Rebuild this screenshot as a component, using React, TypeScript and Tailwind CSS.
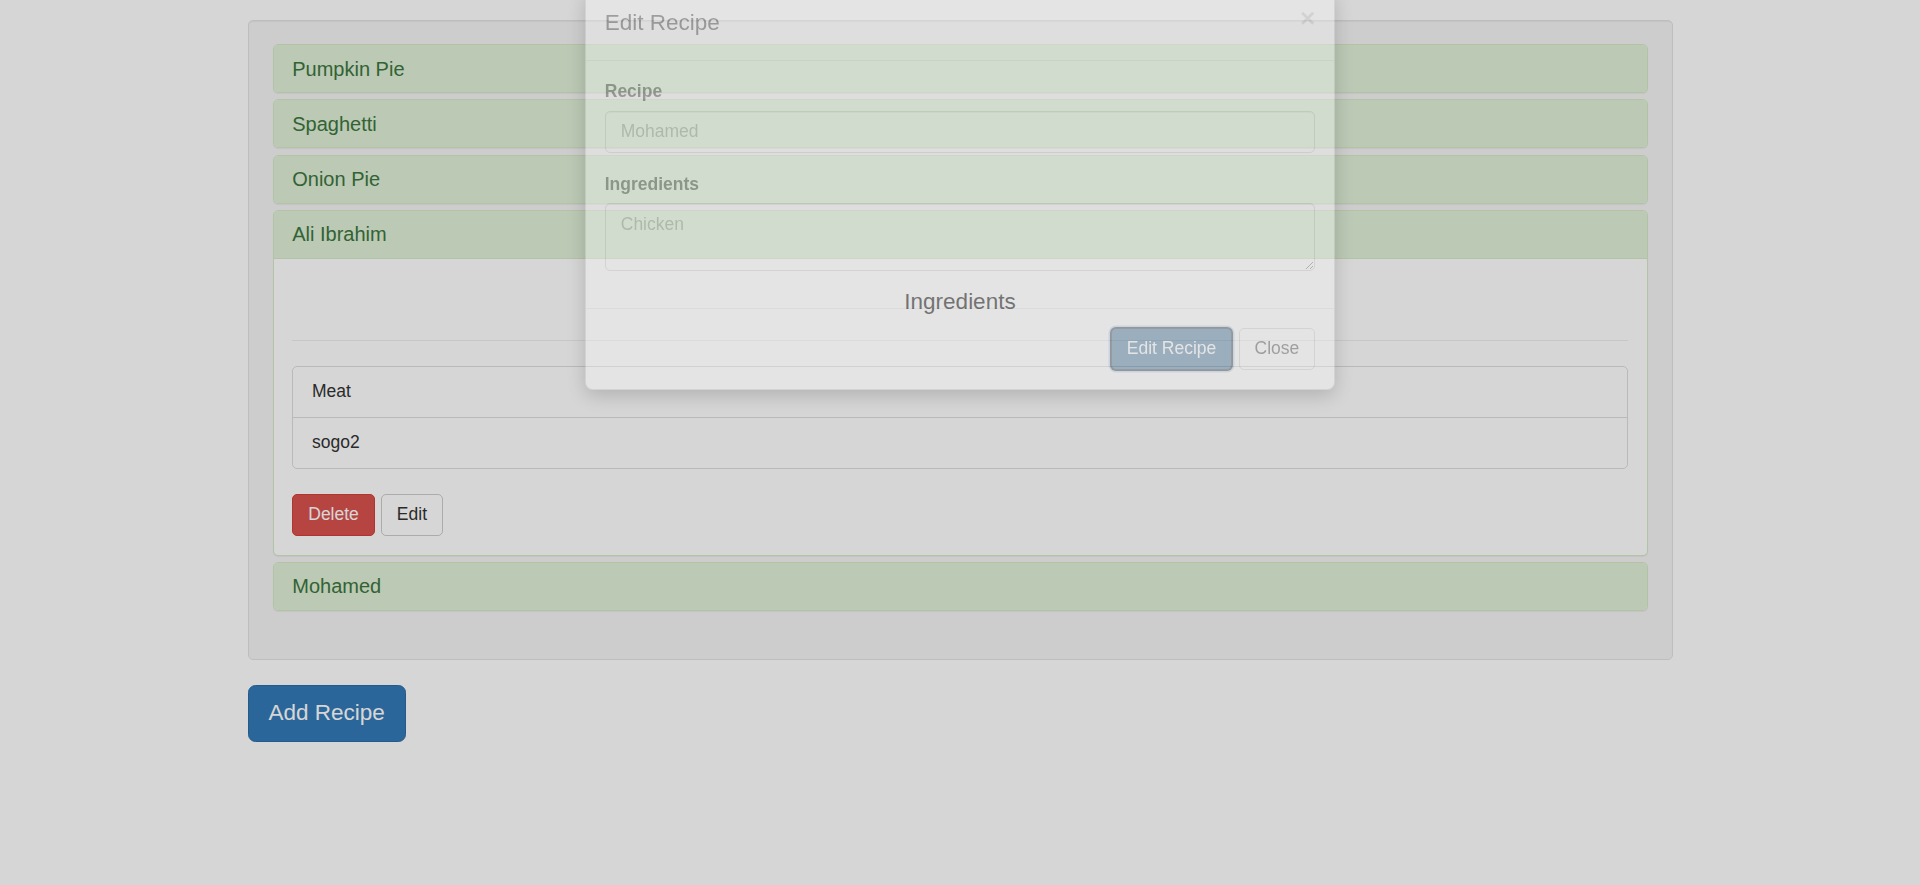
import React from "react";

const recipes = ["Pumpkin Pie", "Spaghetti", "Onion Pie", "Ali Ibrahim", "Mohamed"];
const openRecipe = "Ali Ibrahim";
const ingredients = ["Meat", "sogo2"];

function RecipePanel({ name, open }: { name: string; open: boolean }) {
    return (
        <div className="rounded-[5px] border border-[#d6e9c6] bg-white shadow-[0_1px_1px_rgba(0,0,0,0.05)]">
            <div className={"bg-[#dff0d8] px-[18.75px] py-[12.5px] text-[20px] leading-[22px] text-[#3c763d] rounded-t-[4px] " + (open ? "border-b border-[#d6e9c6]" : "rounded-b-[4px]")}>
                {name}
            </div>
            {open && (
                <div className="p-[18.75px]">
                    <h4 className="mt-[12.5px] mb-[25px] text-center text-[22.5px] leading-[24.75px] font-medium">Ingredients</h4>
                    <hr className="mb-[25px] border-t border-[#eee]" />
                    <ul className="mb-[25px] rounded-[5px] border border-[#ddd]">
                        {ingredients.map((ing, i) => (
                            <li key={i} className={"bg-white px-[18.75px] py-[12.5px] " + (i < ingredients.length - 1 ? "border-b border-[#ddd] rounded-t-[5px]" : "rounded-b-[5px]")}>
                                {ing}
                            </li>
                        ))}
                    </ul>
                    <div className="flex gap-[6px]">
                        <button className="rounded-[5px] border border-[#d43f3a] bg-[#d9534f] px-[15px] py-[7.5px] leading-[25px] text-white">Delete</button>
                        <button className="rounded-[5px] border border-[#ccc] bg-white px-[15px] py-[7.5px] leading-[25px] text-[#333]">Edit</button>
                    </div>
                </div>
            )}
        </div>
    );
}

function EditModal() {
    return (
        <div className="fixed inset-0 z-50 overflow-hidden">
            <div className="absolute left-[585px] top-[-11px] w-[750px] opacity-[0.34]">
                <div className="rounded-[7.5px] border border-black/20 bg-white shadow-[0_6px_19px_rgba(0,0,0,0.5)]">
                    <div className="border-b border-[#e5e5e5] p-[18.75px]">
                        <button className="float-right mt-[-3.5px] text-[26.25px] font-bold leading-none text-black opacity-20 [text-shadow:0_1px_0_#fff]">×</button>
                        <h4 className="relative top-[-2px] text-[22.5px] leading-[32.14px] font-medium">Edit Recipe</h4>
                    </div>
                    <div className="p-[18.75px]">
                        <div className="mb-[18.75px]">
                            <label className="mb-[6.25px] block font-bold">Recipe</label>
                            <input
                                readOnly
                                placeholder="Mohamed"
                                className="block h-[42.5px] w-full rounded-[5px] border border-[#ccc] px-[15px] py-[7.5px] text-[#555] shadow-[inset_0_1px_1px_rgba(0,0,0,0.075)] placeholder:text-[#999]"
                            />
                        </div>
                        <div className="mb-[18.75px]">
                            <label className="mb-[6.25px] block font-bold">Ingredients</label>
                            <textarea
                                readOnly
                                rows={2}
                                placeholder="Chicken"
                                className="block h-[67.5px] w-full rounded-[5px] border border-[#ccc] px-[15px] py-[7.5px] text-[#555] shadow-[inset_0_1px_1px_rgba(0,0,0,0.075)] placeholder:text-[#999]"
                            />
                        </div>
                    </div>
                    <div className="flex justify-end gap-[6.25px] border-t border-[#e5e5e5] p-[18.75px]">
                        <button className="rounded-[5px] border border-[#122b40] bg-[#286090] px-[15px] py-[7.5px] leading-[25px] text-white shadow-[0_0_0_1px_#1c1c1c,0_0_0_2.5px_#b3cff5]">Edit Recipe</button>
                        <button className="rounded-[5px] border border-[#ccc] bg-white px-[15px] py-[7.5px] leading-[25px] text-[#333]">Close</button>
                    </div>
                </div>
            </div>
        </div>
    );
}

export default function App() {
    return (
        <div className="relative min-h-screen bg-white font-['Liberation_Sans',Arial,sans-serif] text-[17.5px] leading-[25px] text-[#333]">
            <div className="mx-auto w-[1425px] pt-[20px]">
                <div className="mb-[25px] rounded-[5px] border border-[#e3e3e3] bg-[#f5f5f5] p-[24px] pt-[23px] shadow-[inset_0_1px_1px_rgba(0,0,0,0.05)]">
                    <div className="mb-[24px] flex flex-col gap-[6.25px]">
                        {recipes.map((r) => (
                            <RecipePanel key={r} name={r} open={r === openRecipe} />
                        ))}
                    </div>
                </div>
                <button className="rounded-[7.5px] border border-[#2e6da4] bg-[#337ab7] px-[20px] py-[12.5px] text-[22.5px] leading-[30px] text-white">Add Recipe</button>
            </div>
            {/* backdrop, still fading in */}
            <div className="fixed inset-0 z-40 bg-black/[0.16]"></div>
            <EditModal />
        </div>
    );
}
